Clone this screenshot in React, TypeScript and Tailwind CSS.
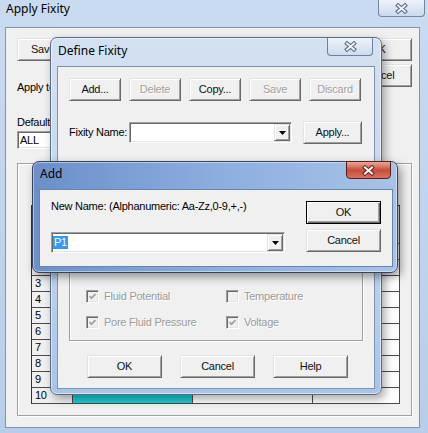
import React from 'react';

const ui = "font-['Liberation_Sans',Arial,sans-serif] text-[11px] leading-[13px] tracking-[-0.25px] text-black";
const caption = "font-['Noto_Sans','Open_Sans',sans-serif] text-[12px] leading-[16px] tracking-normal text-black";

type BtnProps = { label: string; w: string; disabled?: boolean; isDefault?: boolean };

// classic raised push button
function Btn({ label, w, disabled, isDefault }: BtnProps) {
  const edge = isDefault
    ? 'border-black shadow-[inset_1px_1px_#fff,inset_-1px_-1px_#696969,inset_-2px_-2px_#a0a0a0]'
    : 'border-t-[#e3e3e3] border-l-[#e3e3e3] border-r-[#696969] border-b-[#696969] shadow-[inset_1px_1px_#fff,inset_-1px_-1px_#a0a0a0]';
  return (
    <div
      className={`${w} h-[23px] shrink-0 flex items-center justify-center bg-[#f0f0f0] border ${edge} ${
        disabled ? 'text-[#a0a0a0] [text-shadow:1px_1px_#fff]' : 'text-[#111]'
      }`}
    >
      {label}
    </div>
  );
}

function Combo({ w, value, selected }: { w: string; value?: string; selected?: boolean }) {
  return (
    <div className={`${w} h-[21px] flex bg-white p-[1px] border border-t-[#a0a0a0] border-l-[#a0a0a0] border-r-white border-b-white shadow-[inset_1px_1px_#696969,inset_-1px_-1px_#e3e3e3]`}>
      <div className="flex-1 flex items-center">
        {value && <span className={selected ? 'bg-[#3399ff] text-white px-[1px]' : 'px-[1px]'}>{value}</span>}
      </div>
      <div className="w-[16px] h-full flex items-center justify-center bg-[#f0f0f0] border border-t-[#e3e3e3] border-l-[#e3e3e3] border-r-[#696969] border-b-[#696969] shadow-[inset_1px_1px_#fff,inset_-1px_-1px_#a0a0a0]">
        <svg width="7" height="4" viewBox="0 0 7 4">
          <path d="M0 0H7L3.5 4Z" fill="#000" />
        </svg>
      </div>
    </div>
  );
}

function Check({ label, checked }: { label: string; checked?: boolean }) {
  return (
    <div className="flex items-center gap-[5px] h-[14px]">
      <div className="w-[13px] h-[13px] flex items-center justify-center bg-[#f0f0f0] border border-t-[#a0a0a0] border-l-[#a0a0a0] border-r-white border-b-white shadow-[inset_1px_1px_#696969,inset_-1px_-1px_#e3e3e3]">
        {checked && (
          <svg width="7" height="7" viewBox="0 0 7 7">
            <path d="M0.5 3 L2.5 5.2 L6.5 1" stroke="#a0a0a0" strokeWidth="1.7" fill="none" />
          </svg>
        )}
      </div>
      <span className="text-[#9a9a9a] [text-shadow:1px_1px_#fff]">{label}</span>
    </div>
  );
}

function XGlyph({ outline, fill }: { outline: string; fill: string }) {
  const d = 'M3 2.5 L10 8.5 M10 2.5 L3 8.5';
  return (
    <svg width="13" height="11" viewBox="0 0 13 11">
      <path d={d} stroke={outline} strokeWidth="4" strokeLinecap="square" />
      <path d={d} stroke={fill} strokeWidth="2" strokeLinecap="square" />
    </svg>
  );
}

export default function App() {
  const rows = [1, 2, 3, 4, 5, 6, 7, 8, 9, 10];

  return (
    <div className={`relative w-[428px] h-[433px] overflow-hidden flex flex-col bg-linear-to-b from-[#c9dbf1] to-[#b8cde9] select-none ${ui}`}>
      {/* Apply Fixity (back window) */}
      <div className={`h-[27px] shrink-0 pl-[6px] pt-[1px] ${caption}`}>Apply Fixity</div>
      <div className="absolute right-[3px] top-0 w-[47px] h-[17px] rounded-b-[4px] border border-t-0 border-[#7487a2] bg-linear-to-b from-[#eef3fa] to-[#cbd9ed] flex items-center justify-center">
        <XGlyph outline="#55657c" fill="#eef2f8" />
      </div>

      <div className="flex-1 ml-[5px] mr-[8px] mb-[5px] border border-[#8194b0] bg-[#f0f0f0] pl-[11px] pr-[7px] pt-[10px] flex flex-col">
        <div className="flex justify-between">
          <div className="flex flex-col items-start">
            <Btn label="Save" w="w-[52px]" />
            <div className="mt-[20px]">Apply to:</div>
            <div className="mt-[22px]">Default</div>
            <div className="mt-[2px] w-[100px] h-[18px] flex items-center pl-[2px] bg-white border border-t-[#a0a0a0] border-l-[#a0a0a0] border-r-white border-b-white shadow-[inset_1px_1px_#696969,inset_-1px_-1px_#e3e3e3]">
              ALL
            </div>
          </div>
          <div className="flex flex-col gap-[3px]">
            <Btn label="OK" w="w-[68px]" />
            <Btn label="Cancel" w="w-[68px]" />
          </div>
        </div>

        {/* grid group */}
        <div className="mt-[14px] mb-[11px] flex-1 flex flex-col justify-end border border-[#a0a0a0] shadow-[inset_1px_1px_#fff,1px_1px_#fff] pl-[13px] pr-[11px] pb-[11px]">
          <div className="border-l border-t border-[#333] bg-white">
            <div className="grid grid-cols-[41px_120px_120px_1fr]">
              <div className="h-[38px] bg-[#f0f0f0] border-r border-b border-[#4a4a4a]" />
              <div className="h-[38px] bg-[#f0f0f0] border-r border-b border-[#4a4a4a]" />
              <div className="h-[38px] bg-[#f0f0f0] border-r border-b border-[#4a4a4a]" />
              <div className="h-[38px] bg-[#f0f0f0] border-r border-b border-[#4a4a4a]" />
              {rows.map(n => (
                <React.Fragment key={n}>
                  <div className="h-[16px] bg-[#f0f0f0] border-r border-b border-[#4a4a4a] pl-[3px] leading-[15px]">{n}</div>
                  <div className={`h-[16px] border-r border-b border-[#4a4a4a] ${n === 10 ? 'bg-[#19cfd6]' : 'bg-white'}`} />
                  <div className="h-[16px] border-r border-b border-[#4a4a4a] bg-white" />
                  <div className="h-[16px] border-r border-b border-[#4a4a4a] bg-white" />
                </React.Fragment>
              ))}
            </div>
          </div>
        </div>
      </div>

      {/* Define Fixity window */}
      <div className="absolute left-[50px] top-[37px] w-[332px] h-[358px] rounded-[7px] border border-[#5b6b82] bg-linear-to-b from-[#d4e1f1] via-[#c4d6ed] to-[#a9c4e7] px-[6px] pb-[5px] flex flex-col shadow-[inset_0_0_0_1px_rgba(255,255,255,0.5),3px_4px_10px_rgba(0,0,0,0.35)]">
        <div className={`h-[28px] shrink-0 pl-[1px] pt-[5px] ${caption}`}>Define Fixity</div>
        <div className="absolute right-[8px] top-0 w-[46px] h-[18px] rounded-b-[4px] border border-t-0 border-[#6d7f99] bg-linear-to-b from-[#eef3fa] to-[#cddbee] flex items-center justify-center">
          <XGlyph outline="#55657c" fill="#eef2f8" />
        </div>

        <div className="flex-1 border border-[#7f93b3] bg-[#f0f0f0] pl-[11px] pt-[11px] flex flex-col">
          <div className="flex gap-[8px]">
            <Btn label="Add..." w="w-[52px]" />
            <Btn label="Delete" w="w-[52px]" disabled />
            <Btn label="Copy..." w="w-[52px]" />
            <Btn label="Save" w="w-[52px]" disabled />
            <Btn label="Discard" w="w-[52px]" disabled />
          </div>

          <div className="mt-[20px] flex items-center">
            <span className="w-[60px]">Fixity Name:</span>
            <Combo w="w-[163px]" />
            <div className="ml-[11px]">
              <Btn label="Apply..." w="w-[59px]" />
            </div>
          </div>

          <div className="mt-[26px] w-[294px] h-[171px] border border-[#a0a0a0] shadow-[inset_1px_1px_#fff,1px_1px_#fff] flex flex-col justify-end pl-[16px] pb-[11px]">
            <div className="grid grid-cols-[140px_1fr] gap-y-[12px]">
              <Check label="Fluid Potential" checked />
              <Check label="Temperature" />
              <Check label="Pore Fluid Pressure" checked />
              <Check label="Voltage" checked />
            </div>
          </div>

          <div className="mt-[14px] ml-[18px] flex gap-[18px]">
            <Btn label="OK" w="w-[75px]" />
            <Btn label="Cancel" w="w-[75px]" />
            <Btn label="Help" w="w-[75px]" />
          </div>
        </div>
      </div>

      {/* Add window (active) */}
      <div className="absolute left-[32px] top-[161px] w-[366px] h-[112px] rounded-[7px] border border-[#34435a] bg-linear-to-r from-[#6a8fc9] via-[#8cadde] to-[#a8c3e7] pl-[6px] pr-[4px] pb-[5px] flex flex-col shadow-[inset_0_0_0_1px_rgba(255,255,255,0.45),3px_4px_10px_rgba(0,0,0,0.4)]">
        <div className={`h-[27px] shrink-0 pl-[1px] pt-[4px] ${caption}`}>Add</div>
        <div className="absolute right-[6px] top-[-1px] w-[45px] h-[18px] rounded-b-[4px] border border-[#5a1e17] bg-linear-to-b from-[#e9a99b] via-[#c64c3b] to-[#d7735f] flex items-center justify-center">
          <XGlyph outline="#6b2318" fill="#ffffff" />
        </div>

        <div className="flex-1 border border-[#6b84ab] bg-[#f0f0f0] flex justify-between">
          <div className="pl-[11px] pt-[10px] flex flex-col">
            <span>New Name: (Alphanumeric: Aa-Zz,0-9,+,-)</span>
            <div className="mt-[19px]">
              <Combo w="w-[234px]" value="P1" selected />
            </div>
          </div>
          <div className="pt-[11px] pr-[11px] flex flex-col gap-[5px]">
            <Btn label="OK" w="w-[75px]" isDefault />
            <Btn label="Cancel" w="w-[75px]" />
          </div>
        </div>
      </div>
    </div>
  );
}
